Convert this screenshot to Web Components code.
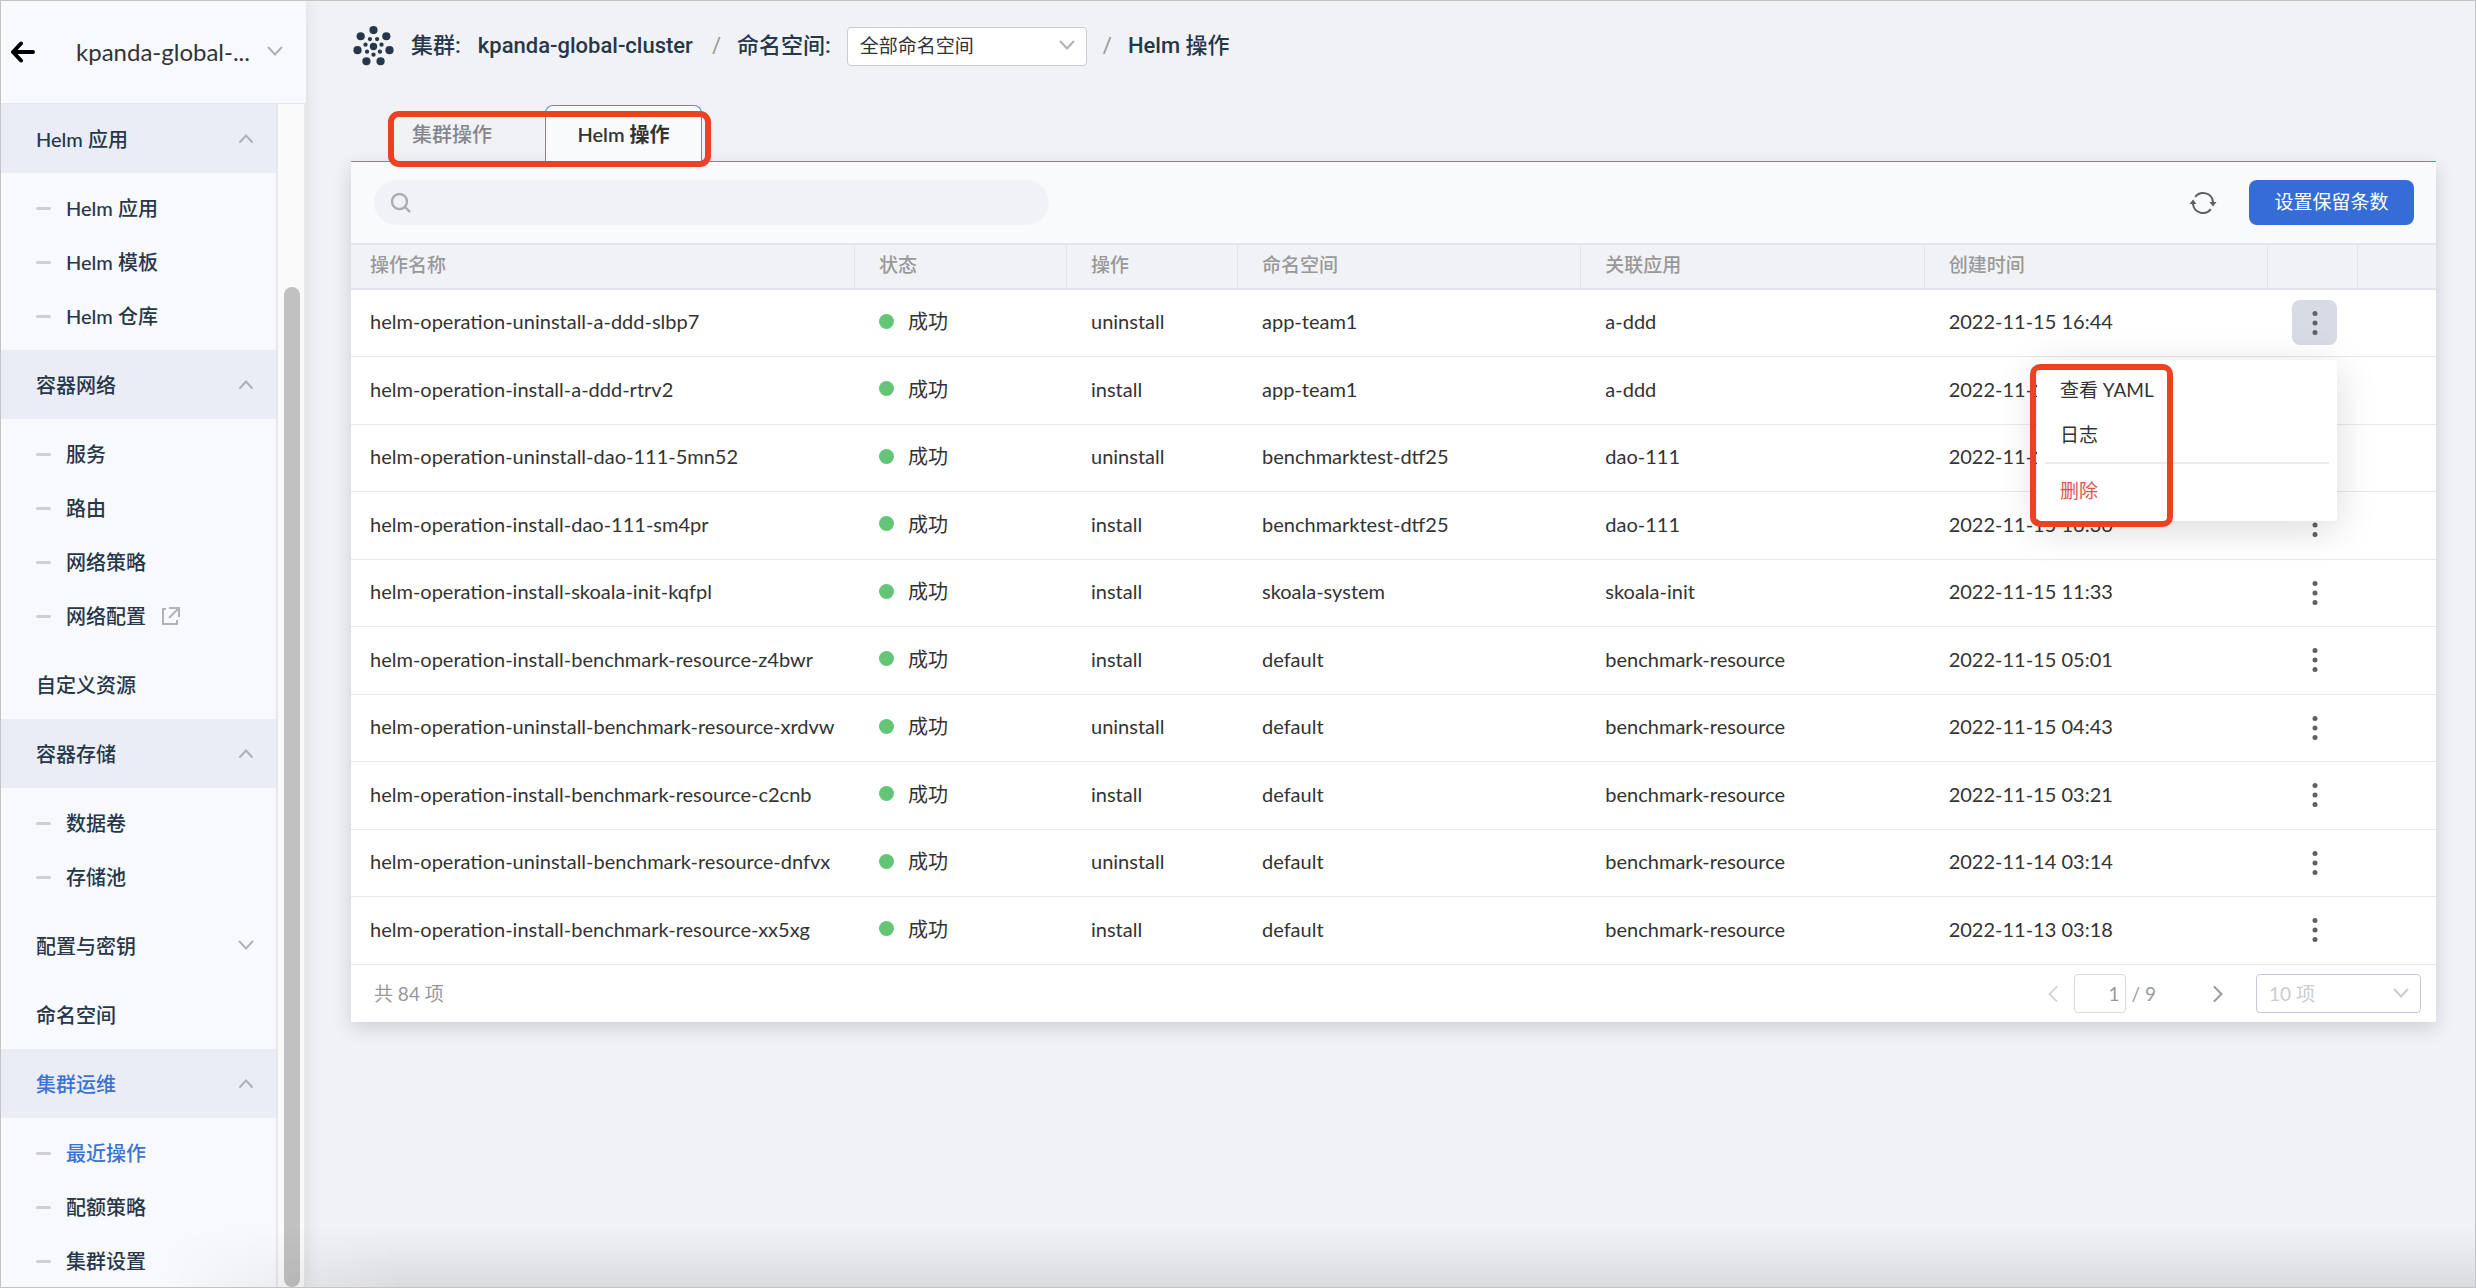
<!DOCTYPE html>
<html lang="zh-CN">
<head>
<meta charset="utf-8">
<title>Helm 操作</title>
<style>
  html, body { margin: 0; height: 100%; }
  body { font-family: Lato, "Noto Sans CJK SC", sans-serif; font-size: 20px; line-height: 28px; color: #333; background: #f1f2f6; }
</style>
</head>
<body>
<kp-app>
  <kp-sidebar slot="side"></kp-sidebar>
  <kp-breadcrumb slot="head"></kp-breadcrumb>
  <kp-tabs slot="main"></kp-tabs>
  <kp-panel slot="main">
    <kp-toolbar></kp-toolbar>
    <kp-table></kp-table>
    <kp-pager></kp-pager>
  </kp-panel>
</kp-app>
<script>
const base = `*{box-sizing:border-box}button,input,select{font:inherit;color:inherit;margin:0}button{border:0;background:none;padding:0;cursor:pointer}a{color:inherit;text-decoration:none}svg{display:block;flex:none}`;
function define(name, css, html, setup) {
  customElements.define(name, class extends HTMLElement {
    constructor() {
      super();
      const root = this.attachShadow({ mode: 'open' });
      root.innerHTML = `<style>${base}${css}</style>` + html;
      if (setup) setup(root, this);
    }
  });
}

/* chevron icon: dir = up | down | left | right */
customElements.define('kp-chevron', class extends HTMLElement {
  connectedCallback() {
    if (this.shadowRoot) return;
    const d = { down: 'M1.5 3.5 8 10.5l6.500-7', up: 'M2 11 8 4.500l6 6.500', left: 'M10.500 1 3.500 8l7 7', right: 'M5.500 1l7 7-7 7' }[this.getAttribute('dir') || 'down'];
    this.attachShadow({ mode: 'open' }).innerHTML =
      `<style>:host{display:block;flex:none;pointer-events:none}svg{display:block}</style><svg width="16" height="16" viewBox="0 0 16 16" fill="none" stroke="currentColor" stroke-width="2" stroke-linecap="round" aria-hidden="true"><path d="${d}"/></svg>`;
  }
});

define('kp-app', `
  :host{display:flex;height:100vh;overflow:hidden;border:1px solid #c4c4c4;position:relative;box-sizing:border-box}
  main{flex:1;min-width:0;padding:0 39px 0 45px;display:flex;flex-direction:column;background:#f1f2f6}
  .shade{position:absolute;inset:auto 0 0 160px;height:60px;pointer-events:none;background:linear-gradient(#0000,#00000017);-webkit-mask-image:linear-gradient(90deg,#0000,#000 240px);mask-image:linear-gradient(90deg,#0000,#000 240px)}
`, `<slot name="side"></slot><main><slot name="head"></slot><slot name="main"></slot></main><div class="shade"></div>`);

const menu = [
  ['Helm 应用', 'up', ['Helm 应用', 'Helm 模板', 'Helm 仓库']],
  ['容器网络', 'up', ['服务', '路由', '网络策略', '网络配置']],
  ['自定义资源', '', []],
  ['容器存储', 'up', ['数据卷', '存储池']],
  ['配置与密钥', 'down', []],
  ['命名空间', '', []],
  ['集群运维', 'up', ['最近操作', '配额策略', '集群设置']]
];
const ext = `<svg width="20" height="20" viewBox="0 0 20 20" fill="none" stroke="#b0b4b9" stroke-width="2" aria-hidden="true"><path d="M5 3H2v15h14v-4M8 2h10v9M17.500 2.500 8 12"/></svg>`;
define('kp-sidebar', `
  :host{display:flex;flex-direction:column;flex:none;width:305px;background:#f7f9fd;box-shadow:0 0 16px #0000001a;position:relative;color:#27374a}
  header{height:103px;flex:none;display:flex;align-items:center;padding:0 23px 0 8px;color:#333;border-bottom:1px solid #e4e6ec}
  .cl{flex:1;display:flex;align-items:center;justify-content:space-between;font-size:24px;margin-left:41px}
  kp-chevron{color:#aeb2b8}
  .body{flex:1;display:flex;min-height:0}
  nav{flex:1;overflow:hidden;font-weight:500}
  ul{list-style:none;margin:0;padding:0}
  .h{width:100%;height:69px;padding:0 22px 0 35px;display:flex;align-items:center;justify-content:space-between;font-weight:500;text-align:left}
  .open{background:#eaedf5}
  .sub{padding:8px 0 7px}
  .sub a{display:flex;align-items:center;height:54px;padding-left:35px}
  .sub a::before{content:"";width:15px;height:3px;border-radius:2px;background:#cdced8;margin-right:15px}
  .sub svg{margin-left:15px}
  .on{color:#3b73d3}
  .track{width:30px;display:flex;flex-direction:column;background:#fafafa;border:solid #e8e8e8;border-width:0 2px;padding:0 4px 0 6px}
  .track::before{content:"";flex:183}
  .track::after{content:"";flex:1000;background:#c1c1c1;border-radius:8px}
`, `<header><button aria-label="返回"><svg width="26" height="22" viewBox="0 0 26 22" fill="none" stroke="#000" stroke-width="4" stroke-linecap="round" stroke-linejoin="round"><path d="M12 2.500 4 11l8 8.500M5 11h19"/></svg></button>
  <button class="cl"><span>kpanda-global-...</span><kp-chevron></kp-chevron></button></header>
  <div class="body"><nav><ul>${menu.map(([t, d, s]) => `<li><button class="h ${s.length ? 'open' : ''} ${t === '集群运维' ? 'on' : ''}"><span>${t}</span>${d ? `<kp-chevron dir="${d}"></kp-chevron>` : ''}</button>${s.length ? `<ul class="sub">${s.map(x => `<li><a href="#" class="${x === '最近操作' ? 'on' : ''}">${x}${x === '网络配置' ? ext : ''}</a></li>`).join('')}</ul>` : ''}</li>`).join('')}</ul></nav><div class="track"></div></div>`);

/* cluster logo: a centre dot, an inner ring of small dots and an outer ring of seven */
function ring(n, r, size, turn) {
  let s = '';
  for (let i = 0; i < n; i++) {
    const a = (i + turn) * 2 * Math.PI / n - Math.PI / 2;
    s += `<circle cx="${(20 + r * Math.cos(a)).toFixed(1)}" cy="${(20 + r * Math.sin(a)).toFixed(1)}" r="${size}"/>`;
  }
  return s;
}
define('kp-breadcrumb', `
  :host{display:flex;align-items:center;height:64px;margin-top:13px;font:500 22px/32px Roboto,"Noto Sans CJK SC",sans-serif;color:#27374a}
  svg{margin:0 17px 0 2px}
  .name{margin:0 3px 0 17px}
  .sep{color:#999;font-weight:400;margin:0 16px}
  .sel{display:grid;align-items:center;width:240px;margin-left:16px}
  .sel>*{grid-area:1/1}
  select{appearance:none;width:100%;height:39px;padding:0 12px;border:1px solid #c9ccd6;border-radius:4px;background:#fff;font:400 19px/28px Lato,"Noto Sans CJK SC",sans-serif;color:#333}
  kp-chevron{justify-self:end;margin-right:12px;color:#aeb2b8}
`, `<svg width="41" height="41" viewBox="0 0 40 40" fill="#27374a" aria-hidden="true">${ring(7, 16, 4, 0)}${ring(7, 8, 2.1, 0.5)}<circle cx="20" cy="20" r="3.600"/></svg>
  <span>集群:</span><span class="name">kpanda-global-cluster</span><span class="sep">/</span><label for="ns">命名空间:</label>
  <div class="sel"><select id="ns"><option>全部命名空间</option></select><kp-chevron></kp-chevron></div><span class="sep">/</span><span>Helm 操作</span>`);

define('kp-tabs', `
  :host{display:flex;box-sizing:border-box;position:relative;z-index:1;margin-top:27px;padding-left:37px;height:57px;border-bottom:1px solid #4a95d9}
  button{width:157px;height:57px;padding:0 0 0 24px;text-align:left;font-weight:500;color:#83878d}
  .on{padding:0;text-align:center;color:#333;font-weight:600;background:#f9fafc;border:1px solid #4a95d9;border-bottom:0;border-radius:8px 8px 0 0}
  .mark{position:absolute;left:37px;top:6px;width:323px;height:56px;border:6px solid #ed4125;border-radius:11px;pointer-events:none;z-index:2}
`, `<button>集群操作</button><button class="on">Helm 操作</button><div class="mark"></div>`);

define('kp-panel', `:host{display:block;background:#fff;box-shadow:0 6px 18px #00002026}`, `<slot></slot>`);

define('kp-toolbar', `
  :host{display:flex;box-sizing:border-box;align-items:center;height:81px;padding:0 22px 0 23px;background:#f9fafc}
  .search{display:flex;align-items:center;width:675px;height:45px;border-radius:23px;background:#f1f2f6;padding:0 16px}
  input{flex:1;min-width:0;border:0;background:none;outline:0;margin-left:8px}
  .r{margin:0 32px 0 auto}
  .p{width:165px;height:45px;padding:0 0 2px;border-radius:8px;background:#356cd6;color:#fff;font-size:19px}
`, `<label class="search"><svg width="22" height="22" viewBox="0 0 22 22" fill="none" stroke="#a9aeb4" stroke-width="2.400" stroke-linecap="round"><circle cx="9.500" cy="9.500" r="7.500"/><path d="m15 15 4.500 4.500"/></svg><input type="text" aria-label="搜索"></label>
  <button class="r" aria-label="刷新"><svg width="28" height="24" viewBox="0 0 28 24" fill="none" stroke="#5c5e60" stroke-width="2"><path d="M6.200 5.800A10 10 0 0 1 24 11M21.800 18.200A10 10 0 0 1 4 13"/><path d="M20.500 11h7L24 15.500zM.5 13h7L4 8.500z" fill="#5c5e60" stroke="none"/></svg></button>
  <button class="p">设置保留条数</button>`);

define('kp-actions', `
  :host{display:block;position:relative;width:45px}
  .k{display:grid;place-items:center;width:45px;height:45px;border-radius:8px;color:#5f6163}
  :host([open]) .k{background:#d7dbe6}
  .menu{position:absolute;z-index:5;top:60px;right:0;width:300px;padding:7px 8px 8px;background:#fff;border-radius:4px;box-shadow:0 8px 40px #00000026;font-size:19px}
  .menu button{display:block;width:100%;height:45px;padding-left:15px;text-align:left}
  hr{border:0;height:2px;margin:5px 0 4px;background:#ebebed}
  .menu .del{color:#d9534f}
  .mark{position:absolute;left:-7px;top:4px;width:143px;height:163px;border:6px solid #ed4125;border-radius:10px;pointer-events:none}
`, `<button class="k" aria-label="更多"><svg width="6" height="24" viewBox="0 0 6 24" fill="currentColor"><circle cx="3" cy="2.500" r="2.500"/><circle cx="3" cy="12" r="2.500"/><circle cx="3" cy="21.500" r="2.500"/></svg></button>`,
  (root, host) => {
    if (host.hasAttribute('open')) root.innerHTML += `<div class="menu"><button>查看 YAML</button><button>日志</button><hr><button class="del">删除</button><div class="mark"></div></div>`;
  });

const rows = [
  ['uninstall-a-ddd-slbp7', 'app-team1', 'a-ddd', '2022-11-15 16:44'],
  ['install-a-ddd-rtrv2', 'app-team1', 'a-ddd', '2022-11-15 16:43'],
  ['uninstall-dao-111-5mn52', 'benchmarktest-dtf25', 'dao-111', '2022-11-15 16:38'],
  ['install-dao-111-sm4pr', 'benchmarktest-dtf25', 'dao-111', '2022-11-15 16:36'],
  ['install-skoala-init-kqfpl', 'skoala-system', 'skoala-init', '2022-11-15 11:33'],
  ['install-benchmark-resource-z4bwr', 'default', 'benchmark-resource', '2022-11-15 05:01'],
  ['uninstall-benchmark-resource-xrdvw', 'default', 'benchmark-resource', '2022-11-15 04:43'],
  ['install-benchmark-resource-c2cnb', 'default', 'benchmark-resource', '2022-11-15 03:21'],
  ['uninstall-benchmark-resource-dnfvx', 'default', 'benchmark-resource', '2022-11-14 03:14'],
  ['install-benchmark-resource-xx5xg', 'default', 'benchmark-resource', '2022-11-13 03:18']
];
define('kp-table', `
  :host{display:block}
  table{width:100%;table-layout:fixed;border-collapse:separate;border-spacing:0}
  th,td{padding:0 0 4px 24px;text-align:left;white-space:nowrap}
  th:first-child,td:first-child{padding-left:19px}
  th{height:47px;background:#f1f2f6;border:solid #e4e5ec;border-width:2px 1px 2px 0;font-size:19px;font-weight:500;color:#999}
  th:last-child{border-right:0}
  td{height:67px;border-bottom:1px solid #e8e9ee}
  tr:nth-child(even) td{height:68px}
  td.act{padding-bottom:1px}
  .st{display:flex;align-items:center;gap:14px}
  .st::before{content:"";width:15px;height:15px;border-radius:50%;background:#65c576}
`, `<table><colgroup><col style="width:504px"><col style="width:212px"><col style="width:171px"><col><col><col><col style="width:90px"><col style="width:78px"></colgroup>
  <thead><tr><th>操作名称</th><th>状态</th><th>操作</th><th>命名空间</th><th>关联应用</th><th>创建时间</th><th></th><th></th></tr></thead>
  <tbody>${rows.map(([n, ns, app, t], i) => `<tr><td>helm-operation-${n}</td><td><span class="st">成功</span></td><td>${n.split('-')[0]}</td><td>${ns}</td><td>${app}</td><td>${t}</td><td class="act"><kp-actions${i ? '' : ' open'}></kp-actions></td><td></td></tr>`).join('')}</tbody></table>`);

define('kp-pager', `
  :host{display:flex;box-sizing:border-box;align-items:center;height:57px;padding:0 15px 0 23px;color:#999;font-size:19px}
  .t{margin-right:auto}
  .pv{color:#d6d6d6;margin-right:12px}
  input{width:52px;height:39px;border:1px solid #d9d9dd;border-radius:4px;text-align:right;padding:0 5px;background:#fff}
  .of{margin-left:6px}
  .nx{margin:0 31px 0 53px}
  .sel{display:grid;align-items:center;width:165px;color:#ccc}
  .sel>*{grid-area:1/1}
  select{appearance:none;width:100%;height:39px;padding:0 12px;border:1px solid #c6c7d6;border-radius:4px;background:#fff}
  .sel kp-chevron{justify-self:end;margin-right:12px}
`, `<span class="t">共 84 项</span><button class="pv" aria-label="上一页"><kp-chevron dir="left"></kp-chevron></button>
  <input type="text" value="1" aria-label="页码"><span class="of">/ 9</span>
  <button class="nx" aria-label="下一页"><kp-chevron dir="right"></kp-chevron></button>
  <div class="sel"><select aria-label="每页条数"><option>10 项</option></select><kp-chevron></kp-chevron></div>`);
</script>
</body>
</html>
